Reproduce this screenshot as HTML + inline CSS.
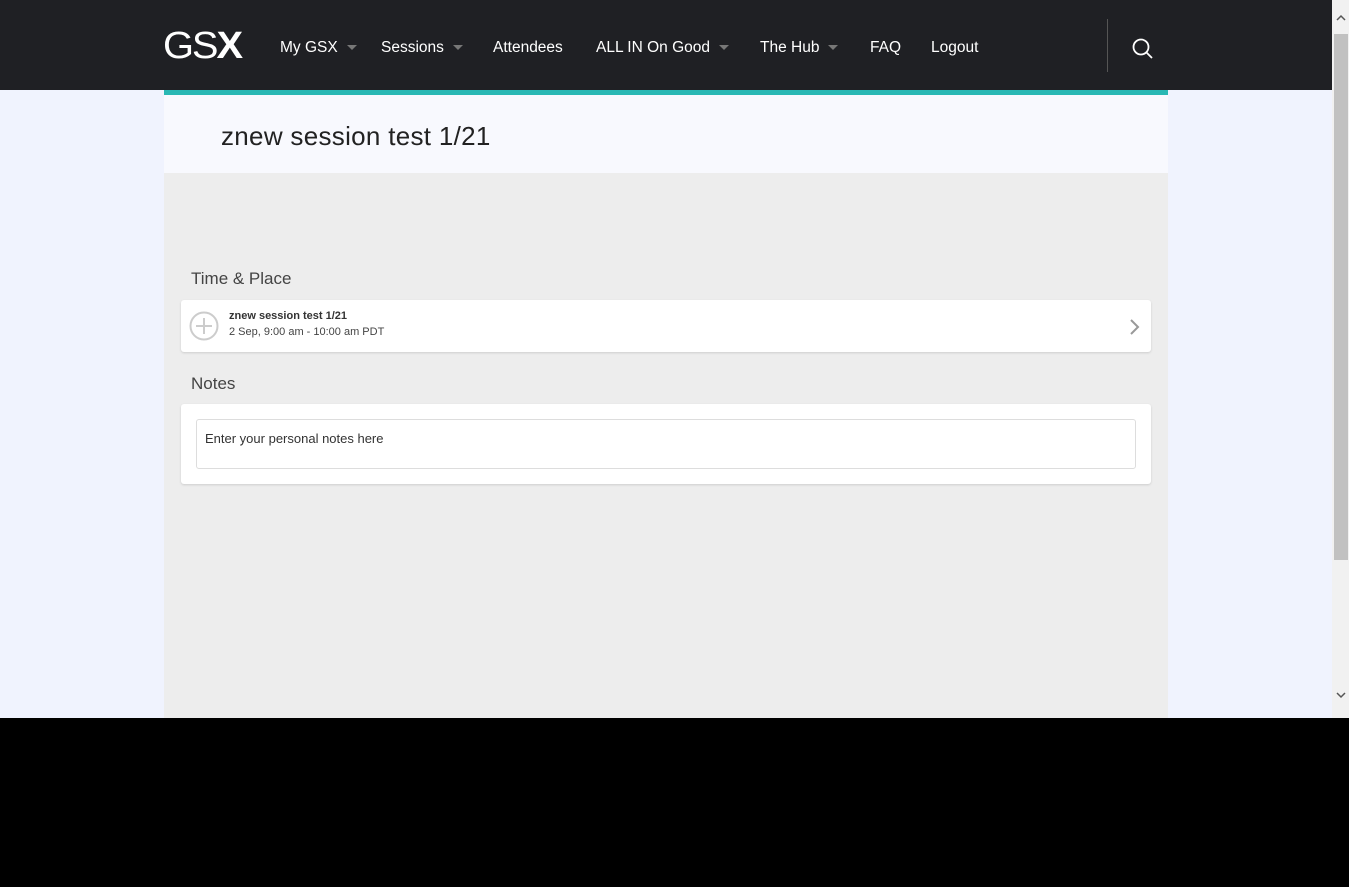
<!DOCTYPE html>
<html><head><style>
*{margin:0;padding:0;box-sizing:border-box}
body{width:1349px;height:887px;background:#000;font-family:"Liberation Sans",sans-serif;overflow:hidden;position:relative}
.view{position:absolute;left:0;top:0;width:1332px;height:718px;background:#f0f3fe;overflow:hidden}
.nav{position:absolute;left:0;top:0;width:1332px;height:90px;background:#1f2024}
.logo{position:absolute;left:163px;top:26px;color:#fff;font-size:38px;letter-spacing:-2px;line-height:40px;transform:scaleX(1.05);transform-origin:left}
.logo b{font-weight:900}
.nav a{position:absolute;top:39px;color:#fff;font-size:15.5px;text-decoration:none}
.caret{display:inline-block;width:0;height:0;border-left:5px solid transparent;border-right:5px solid transparent;border-top:5px solid #777;margin-left:9px;vertical-align:middle}
.sep{position:absolute;left:1107px;top:19px;width:1px;height:53px;background:#555}
.main{position:absolute;left:164px;top:90px;width:1004px;height:628px;background:#ededed}
.top{height:83px;background:#f8f9fe;border-top:5px solid #29b8b4}
.top h1{position:absolute;left:57px;top:31px;font-weight:normal;font-size:26px;color:#222;letter-spacing:0.3px}
.h{position:absolute;left:27px;font-size:17px;color:#444}
.card{position:absolute;left:17px;width:970px;background:#fff;border-radius:3px;box-shadow:0 1px 2px #ccc}
.sb{position:absolute;right:0;top:0;width:17px;height:718px;background:#f1f1f1}
.thumb{position:absolute;left:2px;top:34px;width:14px;height:526px;background:#c1c1c1}
</style></head><body>
<div class="view">
<div class="nav">
<div class="logo">GS<b>X</b></div>
<a style="left:280px">My GSX<span class="caret"></span></a>
<a style="left:381px">Sessions<span class="caret"></span></a>
<a style="left:493px">Attendees</a>
<a style="left:596px">ALL IN On Good<span class="caret"></span></a>
<a style="left:760px">The Hub<span class="caret"></span></a>
<a style="left:870px">FAQ</a>
<a style="left:931px">Logout</a>
<div class="sep"></div>
<svg style="position:absolute;left:1131px;top:37px" width="24" height="24" viewBox="0 0 24 24" fill="none" stroke="#fff" stroke-width="1.8"><circle cx="10" cy="10" r="7.5"/><path d="M15.5 15.5L21 21"/></svg>
</div>
<div class="main">
<div class="top"><h1>znew session test 1/21</h1></div>
<div class="h" style="top:179px">Time &amp; Place</div>
<div class="card" style="top:210px;height:52px">
<svg style="position:absolute;left:8px;top:11px" width="30" height="30" viewBox="0 0 30 30" fill="none" stroke="#ccc" stroke-width="2"><circle cx="15" cy="15" r="13.5"/><path d="M15 7v16M7 15h16"/></svg>
<div style="position:absolute;left:48px;top:10px;font-size:11px;font-weight:bold;color:#333">znew session test 1/21</div>
<div style="position:absolute;left:48px;top:26px;font-size:11px;color:#444">2 Sep, 9:00 am - 10:00 am PDT</div>
<svg style="position:absolute;left:948px;top:18px" width="12" height="18" viewBox="0 0 12 18" fill="none" stroke="#999" stroke-width="2"><path d="M2 2l7 7-7 7"/></svg>
</div>
<div class="h" style="top:284px">Notes</div>
<div class="card" style="top:314px;height:80px">
<div style="position:absolute;left:15px;top:15px;width:940px;height:50px;border:1px solid #ddd;border-radius:3px;font-size:13px;color:#333;padding:11px 8px">Enter your personal notes here</div>
</div>
</div>
</div>
<div class="sb"><div class="thumb"></div>
<svg style="position:absolute;left:3px;top:13px" width="12" height="10" viewBox="0 0 12 10" fill="none" stroke="#555" stroke-width="1.5"><path d="M2 7l4-4 4 4"/></svg>
<svg style="position:absolute;left:3px;top:690px" width="12" height="10" viewBox="0 0 12 10" fill="none" stroke="#555" stroke-width="1.5"><path d="M2 3l4 4 4-4"/></svg>
</div>
</body></html>
